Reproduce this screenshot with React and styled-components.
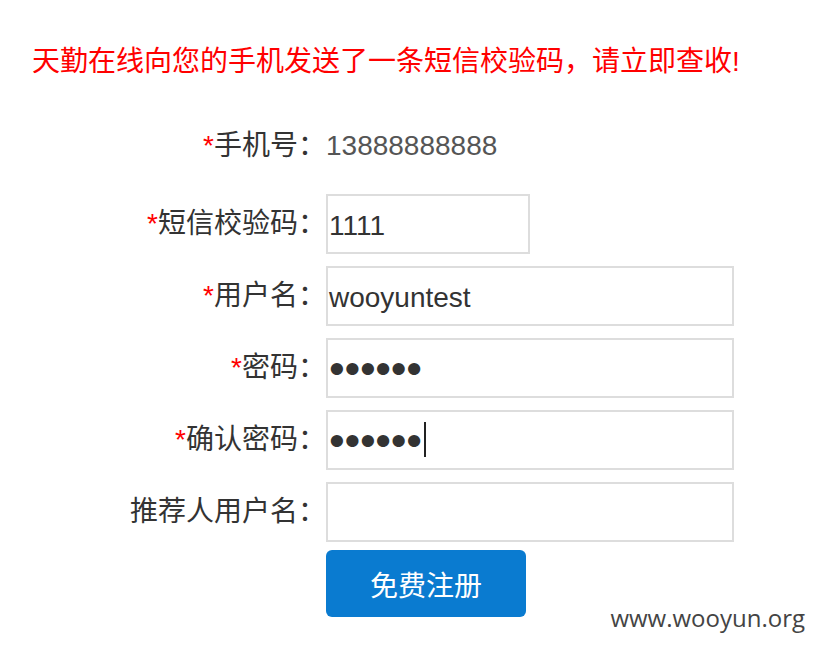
import React from "react";
import styled, { createGlobalStyle } from "styled-components";

const Global = createGlobalStyle`
  html, body { margin: 0; padding: 0; background: #fff; }
  body { font-family: "Liberation Sans", "Noto Sans CJK SC", sans-serif; }
`;

const Page = styled.div`
  position: relative;
  width: 814px;
  height: 648px;
  padding-top: 45px;
  box-sizing: border-box;
  overflow: hidden;
`;

const Notice = styled.p`
  margin: 0 0 0 32px;
  font-size: 28px;
  line-height: 34px;
  color: #ff0000;
`;

const Form = styled.div`
  margin-top: 37px;
  display: grid;
  grid-template-columns: 326px auto;
  row-gap: 12px;
  align-items: center;
`;

const Label = styled.div`
  text-align: right;
  font-size: 28px;
  color: #333;
  height: 60px;
  line-height: 60px;
  white-space: nowrap;
  margin-bottom: ${(p) => (p.$extra ? "6px" : "0")};
`;

const Star = styled.span`
  color: #ff0000;
`;

const Value = styled.div`
  font-size: 28px;
  color: #555;
  height: 60px;
  line-height: 60px;
  margin-bottom: ${(p) => (p.$extra ? "6px" : "0")};
`;

const Field = styled.div`
  box-sizing: border-box;
  width: ${(p) => (p.$short ? "204px" : "408px")};
  height: 60px;
  border: 2px solid #dddddd;
  padding: 3px 0 0 1px;
  display: flex;
  align-items: center;
  font-size: 28px;
  color: #333;
`;

const Dots = styled.span`
  font-size: 45px;
  letter-spacing: -0.3px;
  line-height: 1;
  color: #333;
  position: relative;
  top: -1px;
`;

const Caret = styled.span`
  display: inline-block;
  width: 2px;
  height: 35px;
  background: #222;
  margin-left: 2px;
  position: relative;
  top: -2px;
`;

const Spacer = styled.div``;

const Submit = styled.button`
  margin-top: -4px;
  width: 200px;
  height: 67px;
  border: none;
  border-radius: 6px;
  background: #0a7bd0;
  color: #fff;
  font-family: "Liberation Sans", "Noto Sans CJK SC", sans-serif;
  font-size: 28px;
  padding: 0;
  cursor: pointer;
`;

const Watermark = styled.div`
  position: absolute;
  right: 9px;
  bottom: 14px;
  font-family: "Open Sans", "DejaVu Sans", sans-serif;
  font-size: 24px;
  color: #444;
`;

export default function App() {
  return (
    <Page>
      <Global />
      <Notice>天勤在线向您的手机发送了一条短信校验码，请立即查收!</Notice>
      <Form>
        <Label $extra>
          <Star>*</Star>手机号：
        </Label>
        <Value $extra>13888888888</Value>

        <Label>
          <Star>*</Star>短信校验码：
        </Label>
        <Field $short>1111</Field>

        <Label>
          <Star>*</Star>用户名：
        </Label>
        <Field>wooyuntest</Field>

        <Label>
          <Star>*</Star>密码：
        </Label>
        <Field>
          <Dots>••••••</Dots>
        </Field>

        <Label>
          <Star>*</Star>确认密码：
        </Label>
        <Field>
          <Dots>••••••</Dots>
          <Caret />
        </Field>

        <Label>推荐人用户名：</Label>
        <Field />

        <Spacer />
        <Submit type="button">免费注册</Submit>
      </Form>
      <Watermark>www.wooyun.org</Watermark>
    </Page>
  );
}
